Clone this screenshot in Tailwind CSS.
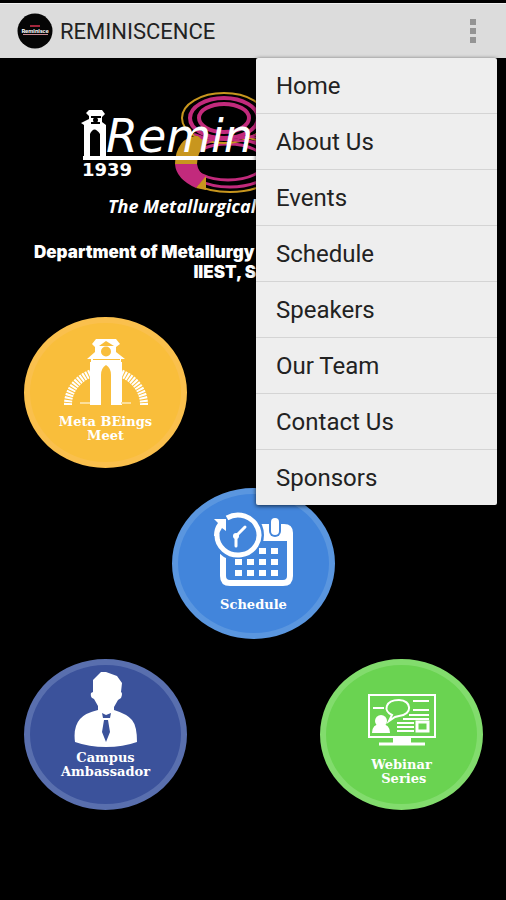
<!DOCTYPE html>
<html lang="en">
<head>
    <meta charset="UTF-8">
    <meta name="viewport" content="width=device-width, initial-scale=1.0">
    <title>REMINISCENCE</title>
    <script src="https://cdn.jsdelivr.net/npm/@tailwindcss/browser@4"></script>
</head>
<body class="bg-black min-h-screen pt-[3px] font-['Roboto',sans-serif]">

    <header class="relative z-10 flex items-center h-[55px] pl-[17px] pr-5 bg-[#dcdcdc] border-t border-[#f0f0f0]">
        <svg class="size-9" viewBox="0 0 36 36" aria-hidden="true">
            <circle cx="18" cy="18" r="17.500" fill="#050505"/>
            <path d="M13 13h10" stroke="#a3263c" stroke-width="2"/>
            <text x="18" y="19.500" fill="#fff" font-size="6" font-weight="900" text-anchor="middle" font-family="Lato, sans-serif">Reminisce</text>
            <path d="M6 21.500h25" stroke="#c98b95" stroke-width="1"/>
        </svg>
        <h1 class="ml-[7px] pt-0.5 text-[22px] leading-7 text-[#222]">REMINISCENCE</h1>

        <button id="menu-button" aria-label="More options" aria-expanded="true" class="ml-auto flex flex-col items-center gap-[3px] px-2.5 py-2">
            <span class="size-1.5 bg-[#949494]"></span>
            <span class="size-1.5 bg-[#949494]"></span>
            <span class="size-1.5 bg-[#949494]"></span>
        </button>

        <nav id="menu" class="absolute top-[54px] right-[9px] w-[241px] bg-[#eee] rounded-xs shadow-[0_1px_4px_rgba(0,0,0,0.7)] divide-y divide-[#d4d4d4] text-[24px] leading-[53px] text-[#222]">
            <a href="#" class="block pl-5 pt-0.5">Home</a>
            <a href="#" class="block pl-5 pt-0.5">About Us</a>
            <a href="#" class="block pl-5 pt-0.5">Events</a>
            <a href="#" class="block pl-5 pt-0.5">Schedule</a>
            <a href="#" class="block pl-5 pt-0.5">Speakers</a>
            <a href="#" class="block pl-5 pt-0.5">Our Team</a>
            <a href="#" class="block pl-5 pt-0.5">Contact Us</a>
            <a href="#" class="block pl-5 pt-0.5">Sponsors</a>
        </nav>
    </header>

    <main>
        <!-- Fest banner -->
        <svg class="block w-full" viewBox="0 58 506 182" role="img" aria-label="Reminiscence, 1939">
            <!-- the big 8 -->
            <g fill="none">
                <ellipse cx="230" cy="164" rx="51" ry="28" stroke="#c8961e" stroke-width="2"/>
                <ellipse cx="230" cy="163" rx="45" ry="24" stroke="#c22a7c" stroke-width="3"/>
                <ellipse cx="228" cy="162" rx="37" ry="18" stroke="#c22a7c" stroke-width="3"/>
                <ellipse cx="224" cy="118" rx="42" ry="25" fill="#000" stroke="#c8961e" stroke-width="2"/>
                <ellipse cx="224" cy="118" rx="34" ry="20" stroke="#c22a7c" stroke-width="4"/>
                <ellipse cx="224" cy="118" rx="25" ry="14" stroke="#c22a7c" stroke-width="4"/>
                <path d="M194 134q30 12 64 0M194 138l66 4M200 144q28-10 60-6" stroke="#c22a7c" stroke-width="2"/>
            </g>
            <path d="M181 144q6-8 17-8l8 8q-9 8-9 20h-22q0-12 6-20z" fill="#c8961e"/>
            <path d="M175 164h22q1 8 9 13l-10 11q-20-9-21-24z" fill="#c22a7c"/>
            <path d="M206 176v14l-10-2z" fill="#c8961e"/>

            <!-- clock tower and base line -->
            <path d="M89 110h13l3 4-3 3v5l4 3v31H84v-31l-3-2 8-4v-3l-3-3z" fill="#fff"/>
            <path d="M91 117h10M91 123h9" stroke="#000" stroke-width="2"/>
            <circle cx="95.500" cy="120" r="2.500" fill="#000"/>
            <path d="M90 156v-22q4-9 10 0v22z" fill="#000"/>
            <path d="M83 156h250v4H83z" fill="#fff"/>
            <g fill="#fff">
                <text x="106" y="152" font-size="46" font-style="italic" font-family="DejaVu Sans, sans-serif">Remin</text>
                <text x="82" y="176" font-size="18" font-weight="700" font-family="DejaVu Sans, sans-serif">1939</text>
                <text x="108" y="213" font-size="18" font-weight="700" font-style="italic" font-family="Open Sans, sans-serif">The Metallurgical</text>
            </g>
        </svg>

        <div class="pt-0.5 font-['Inter',sans-serif] text-[17px] leading-5 font-black text-white">
            <p class="pl-[34px]">Department of Metallurgy</p>
            <p class="text-center">IIEST, Shibpur</p>
        </div>

        <!-- Section buttons -->
        <div class="grid grid-cols-2 gap-y-5 pl-6 pr-[23px] pt-[35px] pb-20 font-['DejaVu_Serif',serif] text-[13px] leading-[14px] font-bold text-white">
            <button class="flex flex-col items-center w-[163px] h-[151px] pt-4 rounded-[50%] bg-[#f9be3b] border-[6px] border-[#fac04d]">
                <svg class="w-[86px] h-[66px]" viewBox="0 0 86 66" aria-hidden="true">
                    <path d="M5 66A38 34 0 0 1 29 34M81 66A38 34 0 0 0 57 34" fill="none" stroke="#fff" stroke-width="8" stroke-dasharray="2 1"/>
                    <path d="M33 0h20l4 5-4 3v5l9 7h-4v3h1v43H27V23h1v-3h-4l8-7V8l-3-3z" fill="#fff"/>
                    <path d="M36 7l7-5 8 5zM30 20h27v1H30zM38 66V36q0-7 5-10 5 3 5 10v30z" fill="#f9be3b"/>
                    <circle cx="43" cy="12.500" r="5" fill="#f9be3b"/>
                    <path d="M17 64h10M58 64h10" stroke="#fcdf9b" stroke-width="2"/>
                </svg>
                <span class="mt-2.5">Meta BEings<br>Meet</span>
            </button>

            <button class="col-span-2 justify-self-center flex flex-col items-center w-[163px] h-[151px] pt-[18px] rounded-[50%] bg-[#4285db] border-[6px] border-[#5a96df]">
                <svg class="w-[82px] h-[76px]" viewBox="0 0 82 76" aria-hidden="true">
                    <path d="M10 40v24q0 7 7 7h53q7 0 7-7V24" fill="none" stroke="#fff" stroke-width="6"/>
                    <path d="M46 12h25q9 0 9 9v8H46z" fill="#fff"/>
                    <rect x="56" y="4" width="12" height="21" rx="6" fill="#4285db"/>
                    <rect x="58" y="6" width="8" height="17" rx="4" fill="#fff"/>
                    <circle cx="25" cy="23" r="26" fill="#4285db"/>
                    <path d="M14 6A21 20 0 1 1 4 22" fill="none" stroke="#fff" stroke-width="5"/>
                    <path d="M1 7h12v12l-4-3q-3 4-3 8H1q0-8 4-13z" fill="#fff"/>
                    <path d="M32 15l-9 9v10" fill="none" stroke="#fff" stroke-width="3" stroke-linecap="round"/>
                    <circle cx="23" cy="24" r="3" fill="#fff"/>
                    <path d="M46 36h7v6h-7zM58 36h7v6h-7zM22 47h7v6h-7zM34 47h7v6h-7zM46 47h7v6h-7zM58 47h7v6h-7zM22 58h7v6h-7zM34 58h7v6h-7zM46 58h7v6h-7zM58 58h7v6h-7z" fill="#fff"/>
                </svg>
                <span class="mt-2.5">Schedule</span>
            </button>

            <button class="flex flex-col items-center w-[163px] h-[151px] pt-1.5 rounded-[50%] bg-[#3b529b] border-[6px] border-[#596fae]">
                <svg class="w-16 h-[76px]" viewBox="0 0 64 76" aria-hidden="true">
                    <path d="M19 9l8-8h5l11 4 5 7-1 9q2 1 0 6l-3 2-4 7v3q13 4 18 10 5 6 5 22-14 5-31 5T1 71Q-1 56 6 48q5-6 18-9v-4l-4-7q-4-1-3-6l2-1z" fill="#fff"/>
                    <path d="M28 42l4 2 5-2-1 5h-7zM30 49h4l2 12-4 10-4-10z" fill="#3b529b"/>
                </svg>
                <span class="mt-1">Campus<br>Ambassador</span>
            </button>

            <button class="justify-self-end flex flex-col items-center w-[163px] h-[151px] pt-7 rounded-[50%] bg-[#6ad351] border-[6px] border-[#82dc6d]">
                <svg class="w-[70px] h-[53px]" viewBox="0 0 70 53" fill="none" stroke="#fff" aria-hidden="true">
                    <path d="M2 2h66v42H2z" stroke-width="2"/>
                    <path d="M6 15h11M46 8h16M46 17h16M42 22h20M36 26h26M30 30h17M30 34h17M30 38h17" stroke-width="2"/>
                    <path d="M50 29h11v9H50z" stroke-width="3"/>
                    <path d="M22 28l3-6C16 18 18 7 32 7c13 0 14 15 0 16l-4 1z" fill="#6ad351" stroke-width="2"/>
                    <path d="M5 40q0-9 9-9t9 9z" fill="#fff" stroke="none"/>
                    <circle cx="14" cy="28" r="6" fill="#fff" stroke="none"/>
                    <path d="M26 44h18v6H26z" fill="#fff" stroke="none"/>
                    <path d="M12 51h46" stroke-width="3"/>
                </svg>
                <span class="mt-3">Webinar<br>&nbsp;Series</span>
            </button>
        </div>
    </main>

    <script>
        const menuButton = document.getElementById('menu-button');
        const menu = document.getElementById('menu');

        menuButton.addEventListener('click', () => {
            const hidden = menu.classList.toggle('hidden');
            menuButton.setAttribute('aria-expanded', String(!hidden));
        });
    </script>
</body>
</html>
